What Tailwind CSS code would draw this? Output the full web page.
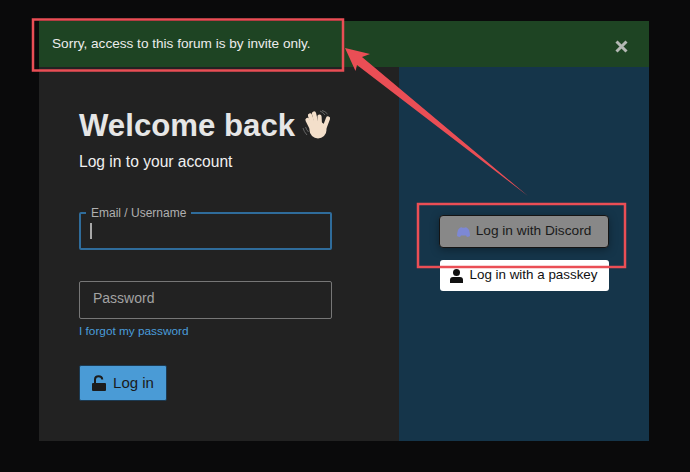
<!doctype html>
<html lang="en">
<head>
    <meta charset="UTF-8"/>
    <meta name="viewport" content="width=device-width, initial-scale=1.0"/>
    <title>Log in</title>
    <script src="https://cdn.jsdelivr.net/npm/@tailwindcss/browser@4"></script>
</head>
<body class="relative w-[690px] h-[472px] overflow-hidden bg-[#0a0a0b] font-['Liberation_Sans',Arial,sans-serif] pt-[21px] pl-[39px]">
<div class="w-[610px] h-[420px] flex flex-col bg-[#222222]">
    <!-- flash message -->
    <div class="h-[46px] shrink-0 flex items-center justify-between bg-[#1e4423] pl-[13px] pr-[21px]">
        <p class="text-[13.6px] text-[#ececec]">Sorry, access to this forum is by invite only.</p>
        <svg class="w-[13px] h-[13px] mt-[4px]" viewBox="0 0 13 13"><path d="M1.5 1.5 L11.5 11.5 M11.5 1.5 L1.5 11.5" stroke="#b4b8b4" stroke-width="3"/></svg>
    </div>
    <div class="flex flex-1">
        <!-- login form -->
        <div class="w-[360px] pl-[40px] pt-[41px] flex flex-col items-start">
            <div class="flex items-center h-[36px]">
                <h1 class="text-[31.2px] leading-[36px] font-bold text-[#e6e6e6]">Welcome back</h1>
                <svg class="w-[31px] h-[31px] ml-[7px] mt-[-2px]" viewBox="0 0 31 31">
                    <path d="M1 18 Q2 22 5 25 M3.500 17 Q4.500 20 6.500 22" stroke="#666" stroke-width="1" fill="none"/>
                    <path d="M18 1 Q21 2 23 5 M20 0.500 Q23 1 25.500 4" stroke="#666" stroke-width="1" fill="none"/>
                    <g stroke="#f3dfca" stroke-width="4.200" stroke-linecap="round" fill="none">
                        <path d="M10 19 L5.500 10"/>
                        <path d="M12 17 L8 5.500"/>
                        <path d="M15 16 L12 3.500"/>
                        <path d="M18 16 L17.500 6.500"/>
                        <path d="M22 19 L26 8.500"/>
                    </g>
                    <ellipse cx="16" cy="20" rx="8.500" ry="8.500" fill="#f3dfca"/>
                </svg>
            </div>
            <p class="mt-[9px] text-[15.6px] leading-[18px] text-[#f0f0f0]">Log in to your account</p>

            <div class="relative mt-[41px] w-[253px] h-[38px] rounded-[2px] border-2 border-[#2f6c9b] flex items-center pl-[9px]">
                <span class="absolute top-[-8px] left-[5px] px-[5px] bg-[#222222] text-[12px] leading-[14px] text-[#b0b0b0]">Email / Username</span>
                <span class="w-[1.500px] h-[16px] bg-[#a8a8a8]"></span>
            </div>

            <div class="mt-[31px] w-[253px] h-[38px] rounded-[2px] border border-[#777777] flex items-center pl-[13px]">
                <span class="text-[14px] text-[#a3a3a3] relative top-[-2px]">Password</span>
            </div>
            <a class="mt-[5px] text-[11.8px] leading-[14px] text-[#4a9ddb]">I forgot my password</a>

            <button class="mt-[27px] w-[88px] h-[36px] flex items-center justify-center gap-[7px] rounded-[2px] bg-[#4a9bd6] border border-[#1c3a52] text-[#1a1a1a] text-[15px]">
                <svg class="w-[14px] h-[16px]" viewBox="0 0 14 16"><path d="M1 8 H13 Q14 8 14 9 V15 Q14 16 13 16 H1 Q0 16 0 15 V9 Q0 8 1 8 Z" fill="#1c1c1c"/><path d="M3 8 V4.500 Q3 1.200 6.500 1.200 Q10 1.200 10.300 4.500" fill="none" stroke="#1c1c1c" stroke-width="2"/></svg>
                Log in
            </button>
        </div>
        <!-- login providers -->
        <div class="flex-1 bg-[#15354a] flex flex-col items-center pt-[148px]">
            <button class="w-[170px] h-[33px] flex items-center justify-center gap-[6px] rounded-[4px] bg-[#888888] border border-[#141414] text-[#1a1a1a] text-[13.7px] shadow-[0_2px_8px_rgba(0,0,0,0.35)]">
                <svg class="w-[13px] h-[10px]" viewBox="0 0 13 10"><path d="M3.500 0.500 Q5 0 5.500 0.800 H7.500 Q8 0 9.500 0.500 Q11 1 12 3 Q13 6 13 9 Q11.500 10 10 10 L9 8.500 H4 L3 10 Q1.500 10 0 9 Q0 6 1 3 Q2 1 3.500 0.500 Z" fill="#7d88d4"/></svg>
                Log in with Discord
            </button>
            <button class="mt-[12px] w-[169px] h-[31px] flex items-center justify-center gap-[6px] rounded-[3px] bg-white text-[#111111] text-[13.4px]">
                <svg class="w-[13px] h-[14px]" viewBox="0 0 13 14"><circle cx="6.500" cy="3.500" r="3.500" fill="#111"/><path d="M0 14 V11 Q0 8 3 8 H10 Q13 8 13 11 V14 Z" fill="#111"/></svg>
                <span>Log in with a passkey</span>
            </button>
        </div>
    </div>
</div>

<!-- annotations drawn over the screenshot -->
<svg class="absolute top-0 left-0 w-[690px] h-[472px] pointer-events-none" viewBox="0 0 690 472">
    <rect x="33" y="19.500" width="310" height="51" fill="none" stroke="#ea4e55" stroke-width="2.500"/>
    <rect x="418" y="204" width="207" height="63" fill="none" stroke="#ea4e55" stroke-width="2.500"/>
    <path d="M345 48 L370 54 L362 57 L528 196 L357 65 L355.500 71 Z" fill="#ea4e55"/>
</svg>
</body>
</html>
